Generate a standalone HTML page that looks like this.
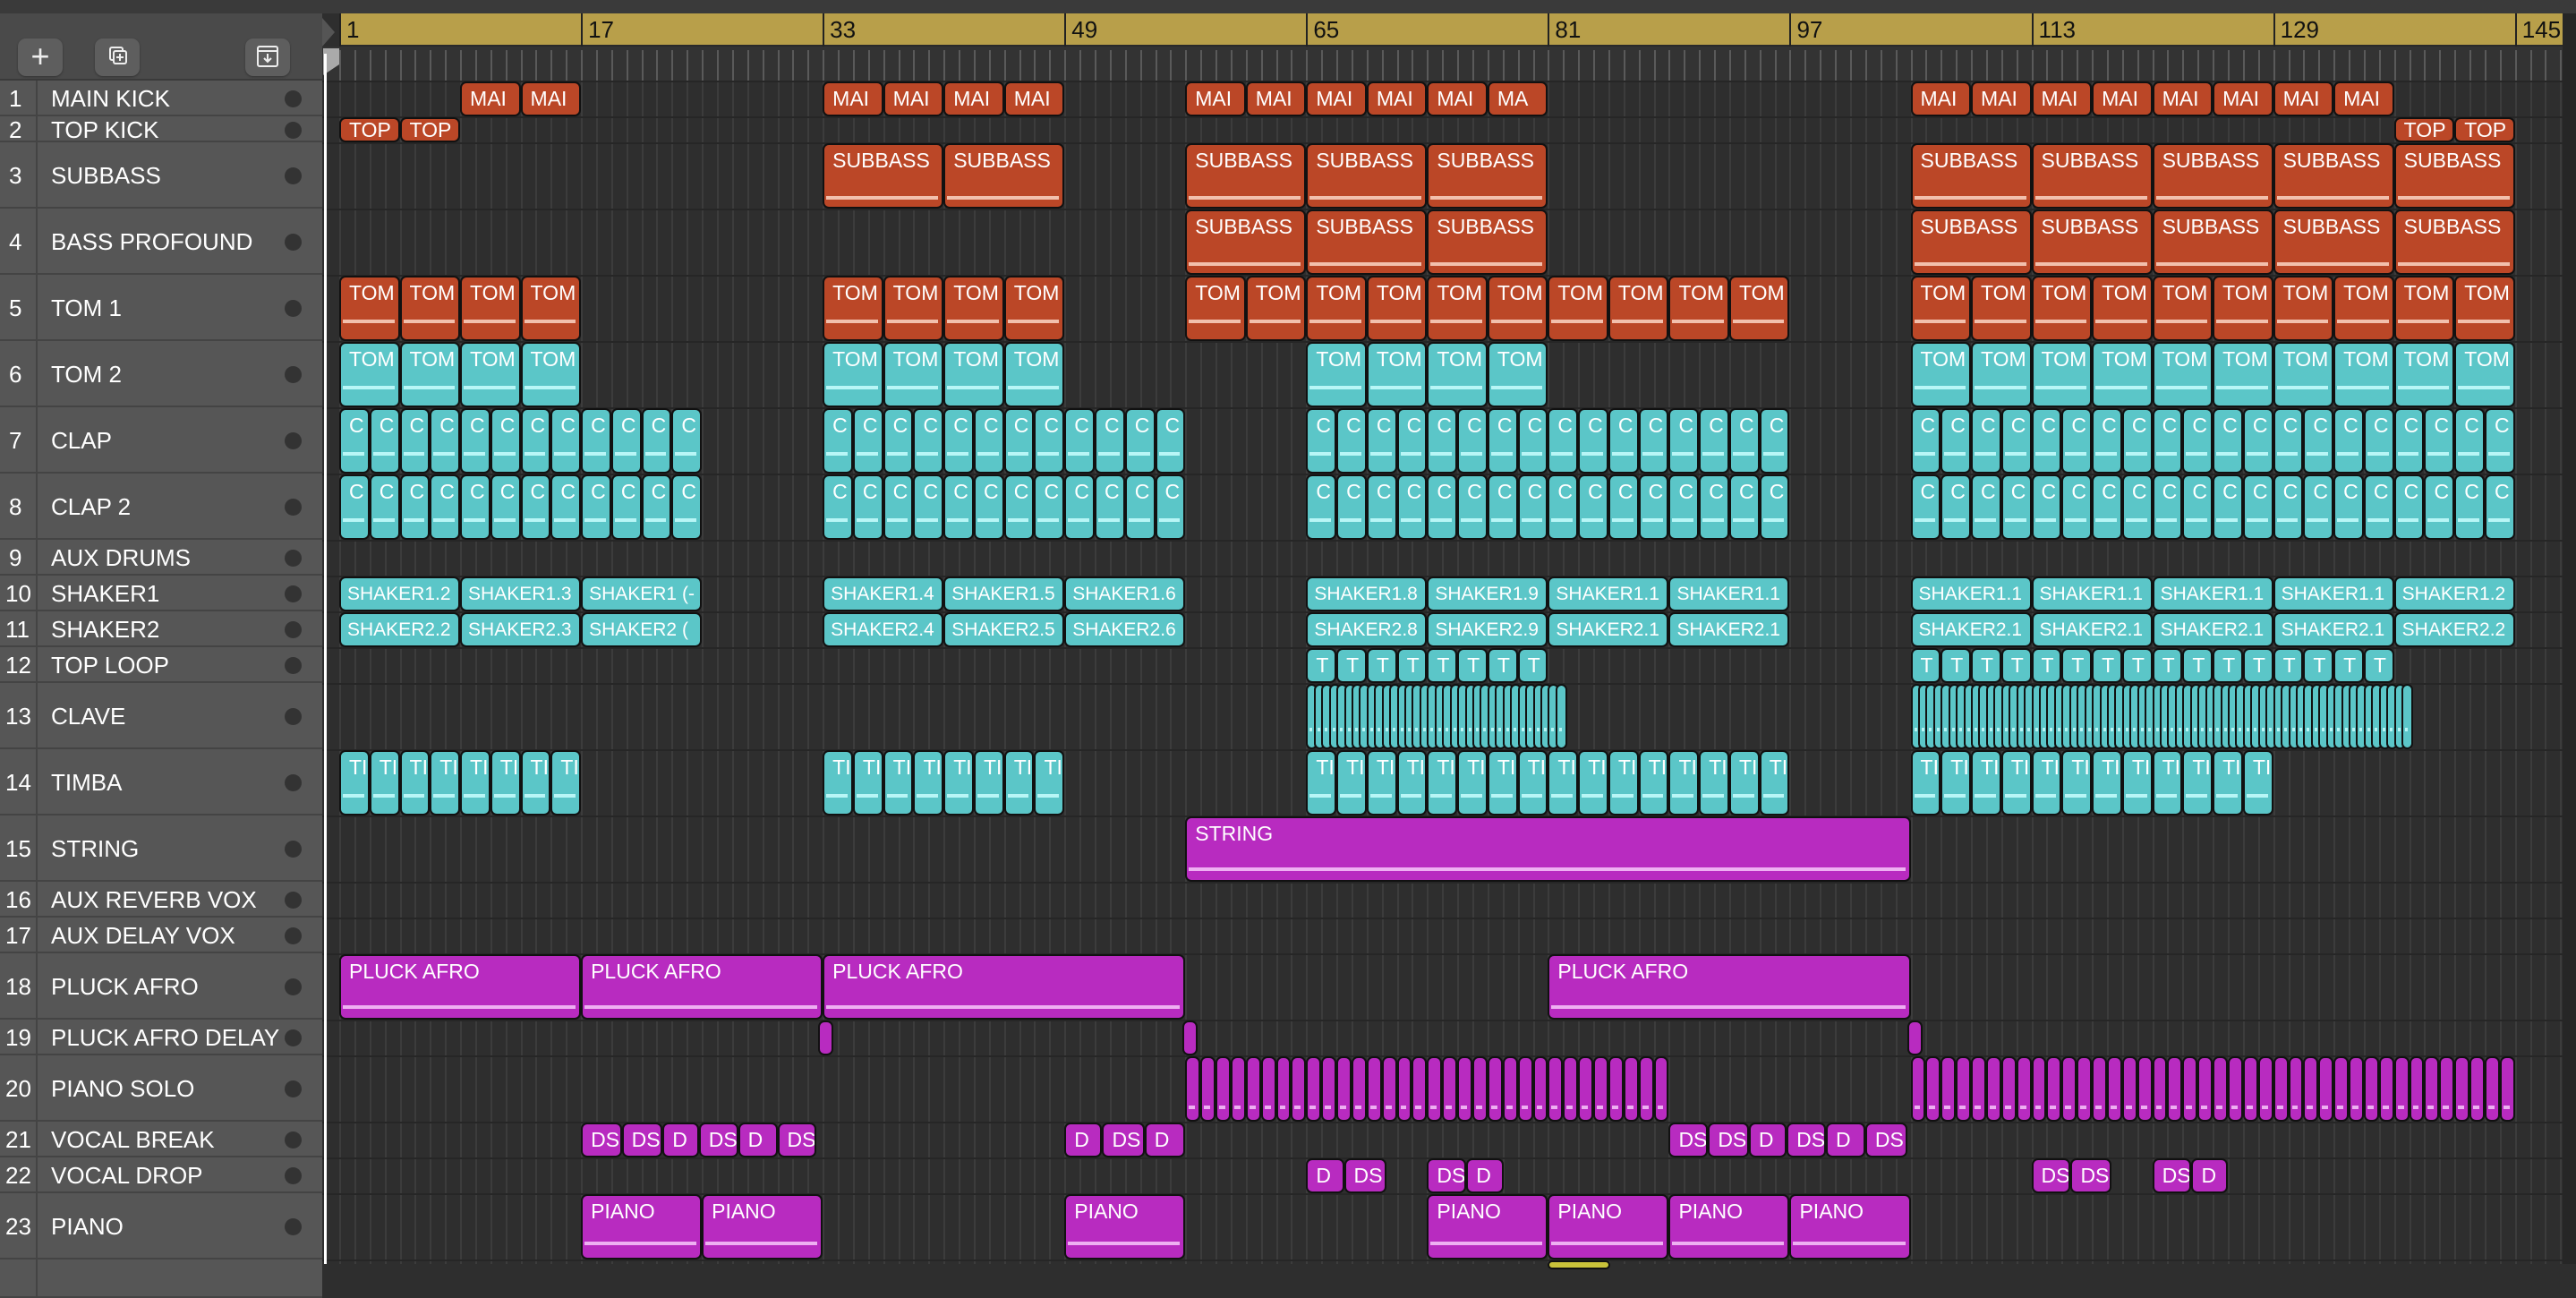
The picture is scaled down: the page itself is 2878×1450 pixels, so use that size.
<!DOCTYPE html>
<html><head><meta charset="utf-8">
<style>
*{margin:0;padding:0;box-sizing:border-box}
body{width:2878px;height:1412px;background:#2e2e2e;overflow:hidden;position:relative;font-family:"Liberation Sans",sans-serif}
.abs{position:absolute}
#top{left:0;top:0;width:2878px;height:15px;background:#3a3a3a}
#hdrtop{left:0;top:15px;width:360px;height:75px;background:#4a4a4a;border-bottom:2px solid #3a3a3a}
.btn{position:absolute;top:30px;width:50px;height:42px;background:#5e5e5e;border-radius:9px;box-shadow:0 1px 2px #333}
#ruler{left:379px;top:15px;width:2484px;height:37px;background:#b89f4a;border-bottom:2px solid #2a2a2a}
#sub{left:360px;top:52px;width:2503px;height:38px;background:#333}
#rightstrip{left:2863px;top:15px;width:15px;height:1397px;background:#262626}
.num{position:absolute;top:0;font-size:26px;color:#111}
.tk{position:absolute;color:#fff;font-size:26px;white-space:nowrap}
.clip{position:absolute;border:2px solid #111;border-radius:7px;color:#fff;font-size:23px;overflow:hidden;white-space:nowrap;padding:5px 0 0 9px;line-height:24px}
.o{background:#bb4727}.c{background:#5bc6c8}.m{background:#b82bc0}
.ln{position:absolute;left:2px;right:4px;height:4px}
</style></head><body>
<div class="abs" id="top"></div>
<div class="abs" style="left:360px;top:15px;width:2503px;height:1397px;background:#2e2e2e" id="grid"></div>
<div class="abs" id="hdrtop">
 <div class="btn" style="left:20px;top:28px;color:#eee;font-size:36px;text-align:center;line-height:40px">+</div>
 <div class="btn" style="left:106px;top:28px"><svg width="50" height="42" viewBox="0 0 50 42"><rect x="17" y="10" width="14" height="14" rx="2" fill="none" stroke="#eee" stroke-width="2"/><rect x="21" y="14" width="14" height="14" rx="2" fill="#5e5e5e" stroke="#eee" stroke-width="2"/><path d="M28 17v8M24 21h8" stroke="#eee" stroke-width="2"/></svg></div>
 <div class="btn" style="left:274px;top:28px"><svg width="50" height="42" viewBox="0 0 50 42"><rect x="14" y="9" width="22" height="22" rx="2" fill="none" stroke="#eee" stroke-width="2"/><path d="M14 14h22M25 17v9M21 22l4 4 4-4" fill="none" stroke="#eee" stroke-width="2"/></svg></div>
</div>
<div class="abs" id="ruler"></div>
<div class="abs" id="sub"></div>
<div class="abs" id="rightstrip"></div>
<div class="abs" id="tracks" style="left:0;top:0;width:2878px;height:1412px"></div>
<div class="abs" style="left:360px;top:20px;width:0;height:0;border-top:16px solid transparent;border-bottom:16px solid transparent;border-left:14px solid #555"></div>
<div class="abs" style="left:361px;top:54px;width:18px;height:30px;background:#aaa;clip-path:polygon(0 0,100% 0,100% 60%,0 100%)"></div>
<div class="abs" style="left:362px;top:60px;width:3px;height:1352px;background:#fff"></div>
<script>
const X=b=>379+(b-1)*16.88;
const tops=[90,130,159,233,307,381,455,529,603,643,683,723,763,837,911,985,1025,1065,1139,1179,1253,1293,1333,1407,1450];
const names=["MAIN KICK","TOP KICK","SUBBASS","BASS PROFOUND","TOM 1","TOM 2","CLAP","CLAP 2","AUX DRUMS","SHAKER1","SHAKER2","TOP LOOP","CLAVE","TIMBA","STRING","AUX REVERB VOX","AUX DELAY VOX","PLUCK AFRO","PLUCK AFRO DELAY","PIANO SOLO","VOCAL BREAK","VOCAL DROP","PIANO",""];
let h='';
let g='';
for(let b=1;b<=149;b++){const x=X(b)-360;g+=`<div class="abs" style="left:${x}px;top:75px;width:2px;height:1322px;background:#3c3c3c"></div>`;}
for(let i=0;i<24;i++){g+=`<div class="abs" style="left:0;top:${tops[i]-15}px;width:2503px;height:2px;background:#262626"></div>`;}
document.getElementById('grid').innerHTML=g;
let r='';
[1,17,33,49,65,81,97,113,129,145].forEach(b=>{const x=X(b)-379;r+=`<div class="abs" style="left:${x}px;top:0;width:2px;height:37px;background:#222"></div><div class="num" style="left:${x+8}px;top:3px">${b}</div>`;});
document.getElementById('ruler').innerHTML=r;
let s='';for(let b=1;b<=149;b++){s+=`<div class="abs" style="left:${X(b)-360}px;top:4px;width:2px;height:34px;background:#5a5a5a"></div>`;}
document.getElementById('sub').innerHTML=s;
for(let i=0;i<24;i++){const t=tops[i],hh=tops[i+1]-t;
h+=`<div class="abs" style="left:0;top:${t}px;width:360px;height:${hh}px;background:#565656;border-bottom:2px solid #444"></div>`;
h+=`<div class="abs" style="left:40px;top:${t}px;width:2px;height:${hh}px;background:#444"></div>`;
if(names[i]){h+=`<div class="tk" style="left:${i<9?10:6}px;top:${t+hh/2-15}px">${i+1}</div><div class="tk" style="left:57px;top:${t+hh/2-15}px">${names[i]}</div><div class="abs" style="left:318px;top:${t+hh/2-9}px;width:19px;height:19px;border-radius:50%;background:#333"></div>`;}
}
function clip(row,b1,b2,cls,label,line){const t=tops[row-1],hh=tops[row]-t;
const x1=X(b1),x2=X(b2);
let inner=label||'';
if(line&&hh>50){const col=cls=='o'?'#f2c0ad':cls=='c'?'#b8f6f6':'#eeb0f2';inner+=`<div class="ln" style="bottom:${line}px;background:${col}"></div>`;}
let st=hh<50?`padding-top:0;line-height:${hh-5}px;`:'';
if(label&&label.startsWith('SHAKER'))st+='font-size:21px;padding-left:7px;';
h+=`<div class="clip ${cls}" style="${st}left:${x1}px;top:${t+1}px;width:${x2-x1}px;height:${hh-1}px">${inner}</div>`;}
function seq(row,a,b,step,cls,lab,line){for(let x=a;x<b-0.01;x+=step)clip(row,x,Math.min(x+step,b),cls,typeof lab=='function'?lab((x-a)/step):lab,line);}
seq(1,9,17,4,'o','MAI');seq(1,33,49,4,'o','MAI');seq(1,57,65,4,'o','MAI');seq(1,65,81,4,'o',i=>i==3?'MA':'MAI');seq(1,105,137,4,'o','MAI');
seq(2,1,9,4,'o','TOP');seq(2,137,145,4,'o','TOP');
[[33,49],[57,81],[105,145]].forEach(([a,b])=>seq(3,a,b,8,'o','SUBBASS',8));
[[57,81],[105,145]].forEach(([a,b])=>seq(4,a,b,8,'o','SUBBASS',8));
[[1,17],[33,49],[57,97],[105,145]].forEach(([a,b])=>seq(5,a,b,4,'o','TOM',18));
[[1,17],[33,49],[65,81],[105,145]].forEach(([a,b])=>seq(6,a,b,4,'c','TOM',18));
[[1,25],[33,57],[65,97],[105,145]].forEach(([a,b])=>{seq(7,a,b,2,'c','C',18);seq(8,a,b,2,'c','C',18);});
const sh1=[['SHAKER1.2','SHAKER1.3','SHAKER1 (-'],['SHAKER1.4','SHAKER1.5','SHAKER1.6'],['SHAKER1.8','SHAKER1.9','SHAKER1.1','SHAKER1.1'],['SHAKER1.1','SHAKER1.1','SHAKER1.1','SHAKER1.1','SHAKER1.2']];
const sh2=[['SHAKER2.2','SHAKER2.3','SHAKER2 ('],['SHAKER2.4','SHAKER2.5','SHAKER2.6'],['SHAKER2.8','SHAKER2.9','SHAKER2.1','SHAKER2.1'],['SHAKER2.1','SHAKER2.1','SHAKER2.1','SHAKER2.1','SHAKER2.2']];
[[1,25],[33,57],[65,97],[105,145]].forEach(([a,b],k)=>{seq(10,a,b,8,'c',i=>sh1[k][i]);seq(11,a,b,8,'c',i=>sh2[k][i]);});
seq(12,65,81,2,'c','T');seq(12,105,137,2,'c','T');
seq(13,65,81.6,0.5,'c','',18);seq(13,105,138,0.5,'c','',18);
[[1,17],[33,49],[65,97],[105,129]].forEach(([a,b])=>seq(14,a,b,2,'c','TI',18));
clip(15,57,105,'m','STRING',10);
clip(18,1,17,'m','PLUCK AFRO',10);clip(18,17,33,'m','PLUCK AFRO',10);clip(18,33,57,'m','PLUCK AFRO',10);clip(18,81,105,'m','PLUCK AFRO',10);
[32.7,56.8,104.8].forEach(b=>clip(19,b,b+1,'m',''));
seq(20,57,89,1,'m','',12);seq(20,105,145,1,'m','',12);
const vb=[['DS',17,19.7],['DS',19.7,22.4],['D',22.4,24.8],['DS',24.8,27.4],['D',27.4,30],['DS',30,32.6],['D',49,51.5],['DS',51.5,54.3],['D',54.3,57],['DS',89,91.6],['DS',91.6,94.3],['D',94.3,96.8],['DS',96.8,99.4],['D',99.4,102],['DS',102,104.8]];
vb.forEach(v=>clip(21,v[1],v[2],'m',v[0]));
const vd=[['D',65,67.5],['DS',67.5,70.3],['DS',73,75.6],['D',75.6,78.1],['DS',113,115.6],['DS',115.6,118.3],['DS',121,123.6],['D',123.6,126]];
vd.forEach(v=>clip(22,v[1],v[2],'m',v[0]));
[[17,25],[25,33],[49,57],[73,81],[81,89],[89,97],[97,105]].forEach(([a,b])=>clip(23,a,b,'m','PIANO',14));
h+=`<div class="abs" style="left:${X(81)}px;top:1408px;width:70px;height:10px;background:#c9c23a;border:2px solid #111;border-radius:6px"></div>`;
document.getElementById('tracks').innerHTML=h;
</script>
</body></html>
